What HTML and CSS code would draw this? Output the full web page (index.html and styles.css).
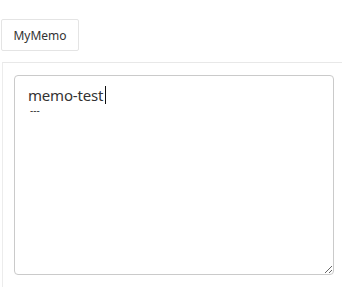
FILE: index.html
```html
<!DOCTYPE html>
<html>
<head>
<meta charset="utf-8">
<link rel="stylesheet" href="styles.css">
</head>
<body>
<div class="tabs">
  <div class="tab">MyMemo</div>
</div>
<div class="panel">
  <div class="editor">
    <div class="title">memo-test<span class="caret"></span></div>
    <div class="sep">---</div>
  </div>
</div>
</body>
</html>
```
FILE: styles.css
```css
html, body {
  margin: 0;
  padding: 0;
  background: #fff;
  font-family: "Noto Sans", "Open Sans", sans-serif;
  color: #333;
  overflow: hidden;
}
.tabs {
  padding-top: 19px;
  padding-left: 1px;
}
.tab {
  box-sizing: border-box;
  width: 78px;
  height: 32px;
  border: 1px solid #e4e4e4;
  border-radius: 2px;
  display: flex;
  align-items: center;
  justify-content: center;
  font-size: 12px;
  color: #333;
}
.panel {
  margin-top: 11px;
  margin-left: 2px;
  border-top: 1px solid #e8e8e8;
  border-left: 1px solid #ececec;
  padding: 12px 0 0 11px;
  height: 212px;
}
.editor {
  box-sizing: border-box;
  width: 320px;
  height: 200px;
  border: 1px solid #cacaca;
  border-radius: 4px;
  padding: 9px 13px;
  resize: both;
  overflow: auto;
}
.title {
  font-size: 15px;
  letter-spacing: -0.2px;
  line-height: 20px;
  color: #333;
  display: flex;
  align-items: center;
}
.caret {
  display: inline-block;
  width: 1px;
  height: 18px;
  background: #111;
  margin-left: 2px;
}
.sep {
  font-size: 10px;
  line-height: 10px;
  color: #333;
  padding-left: 2px;
}
```
